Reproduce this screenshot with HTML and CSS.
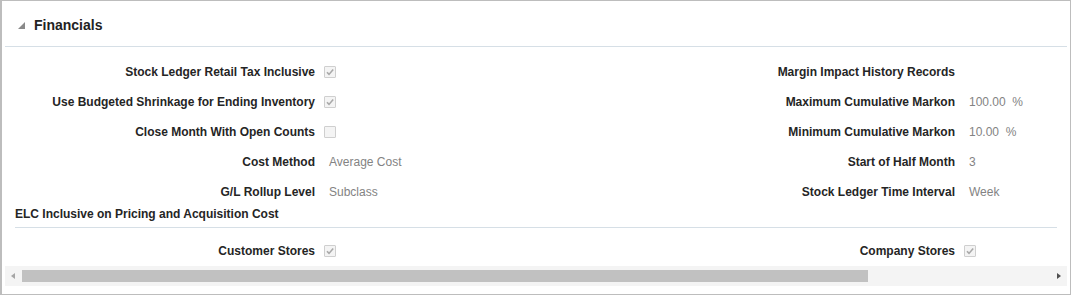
FILE: index.html
```html
<!DOCTYPE html>
<html>
<head>
    <title>Financials</title>
    <link rel="stylesheet" href="styles.css">
</head>
<body>
    <div class="panel">
        <div class="panel_header">
            <svg class="disclosure" width="7" height="7" viewBox="0 0 7 7"><polygon points="7,0 7,7 0,7" fill="#8a8a8a"/></svg>
            <h2>Financials</h2>
        </div>
        <div class="panel_body">
            <div class="form_columns">
                <div class="form_column">
                    <div class="form_row">
                        <label>Stock Ledger Retail Tax Inclusive</label>
                        <span class="check checked"><svg width="12" height="12" viewBox="0 0 12 12"><path d="M3 6.2 L5 8.4 L9.2 3.4" fill="none" stroke="#a9a9a9" stroke-width="1.6"/></svg></span>
                    </div>
                    <div class="form_row">
                        <label>Use Budgeted Shrinkage for Ending Inventory</label>
                        <span class="check checked"><svg width="12" height="12" viewBox="0 0 12 12"><path d="M3 6.2 L5 8.4 L9.2 3.4" fill="none" stroke="#a9a9a9" stroke-width="1.6"/></svg></span>
                    </div>
                    <div class="form_row">
                        <label>Close Month With Open Counts</label>
                        <span class="check"></span>
                    </div>
                    <div class="form_row">
                        <label>Cost Method</label>
                        <span class="value">Average Cost</span>
                    </div>
                    <div class="form_row">
                        <label>G/L Rollup Level</label>
                        <span class="value">Subclass</span>
                    </div>
                </div>
                <div class="form_column">
                    <div class="form_row">
                        <label>Margin Impact History Records</label>
                        <span class="value"></span>
                    </div>
                    <div class="form_row">
                        <label>Maximum Cumulative Markon</label>
                        <span class="value">100.00&nbsp; %</span>
                    </div>
                    <div class="form_row">
                        <label>Minimum Cumulative Markon</label>
                        <span class="value">10.00&nbsp; %</span>
                    </div>
                    <div class="form_row">
                        <label>Start of Half Month</label>
                        <span class="value">3</span>
                    </div>
                    <div class="form_row">
                        <label>Stock Ledger Time Interval</label>
                        <span class="value">Week</span>
                    </div>
                </div>
            </div>

            <div class="subsection">
                <h3>ELC Inclusive on Pricing and Acquisition Cost</h3>
                <div class="form_columns">
                    <div class="form_column">
                        <div class="form_row">
                            <label>Customer Stores</label>
                            <span class="check checked"><svg width="12" height="12" viewBox="0 0 12 12"><path d="M3 6.2 L5 8.4 L9.2 3.4" fill="none" stroke="#a9a9a9" stroke-width="1.6"/></svg></span>
                        </div>
                    </div>
                    <div class="form_column">
                        <div class="form_row">
                            <label>Company Stores</label>
                            <span class="check checked"><svg width="12" height="12" viewBox="0 0 12 12"><path d="M3 6.2 L5 8.4 L9.2 3.4" fill="none" stroke="#a9a9a9" stroke-width="1.6"/></svg></span>
                        </div>
                    </div>
                </div>
            </div>
        </div>
        <div class="hscroll">
            <span class="arrow_left"></span>
            <div class="hscroll_track">
                <div class="hscroll_thumb"></div>
            </div>
            <span class="arrow_right"></span>
        </div>
    </div>
</body>
</html>
```
FILE: styles.css
```css
* {
    font-family: "Liberation Sans", Arial, sans-serif;
    box-sizing: border-box;
}
body {
    margin: 0;
    background: #ffffff;
}
.panel {
    width: 1071px;
    height: 295px;
    border: 1px solid #bdbdbd;
    border-left-width: 2px;
    background: #ffffff;
}
.panel_header {
    display: flex;
    align-items: center;
    height: 46px;
    margin: 0 3px;
    padding: 2px 0 0 13px;
    border-bottom: 1px solid #d6dfe6;
}
.disclosure {
    margin-right: 9px;
    margin-top: 1px;
}
.panel_header h2 {
    margin: 0;
    font-size: 14px;
    font-weight: bold;
    color: #222222;
}
.panel_body {
    padding: 10px 0 0 13px;
}
.form_columns {
    display: flex;
}
.form_column {
    width: 640px;
    flex-shrink: 0;
}
.form_column + .form_column {
    flex: 1;
    width: auto;
}
.form_row {
    display: flex;
    align-items: center;
    height: 30px;
}
.form_row label {
    width: 309px;
    text-align: right;
    font-size: 12px;
    font-weight: bold;
    color: #252525;
    padding-right: 9px;
    flex-shrink: 0;
}
.value {
    font-size: 12px;
    color: #838383;
    padding-left: 5px;
}
.check {
    display: inline-block;
    width: 12px;
    height: 12px;
    border: 1px solid #cfcfcf;
    border-radius: 1px;
    background: #f4f4f4;
    position: relative;
}
.check svg {
    position: absolute;
    top: -1px;
    left: -1px;
}
.subsection h3 {
    margin: 0 13px 0 0;
    font-size: 12px;
    font-weight: bold;
    color: #252525;
    height: 21px;
    line-height: 14px;
    border-bottom: 1px solid #d6dfe6;
}
.subsection .form_columns {
    padding-top: 8px;
}
.hscroll {
    display: flex;
    align-items: center;
    height: 20px;
    margin: 0 3px;
    background: #f4f4f4;
}
.arrow_left {
    width: 0;
    height: 0;
    margin: 0 7px 0 6px;
    border-top: 3px solid transparent;
    border-bottom: 3px solid transparent;
    border-right: 4px solid #a6a6a6;
}
.hscroll_track {
    flex: 1;
    height: 12px;
}
.hscroll_thumb {
    width: 846px;
    height: 12px;
    background: #c1c1c1;
}
.arrow_right {
    width: 0;
    height: 0;
    margin: 0 6px 0 7px;
    border-top: 3px solid transparent;
    border-bottom: 3px solid transparent;
    border-left: 4px solid #505050;
}
```
